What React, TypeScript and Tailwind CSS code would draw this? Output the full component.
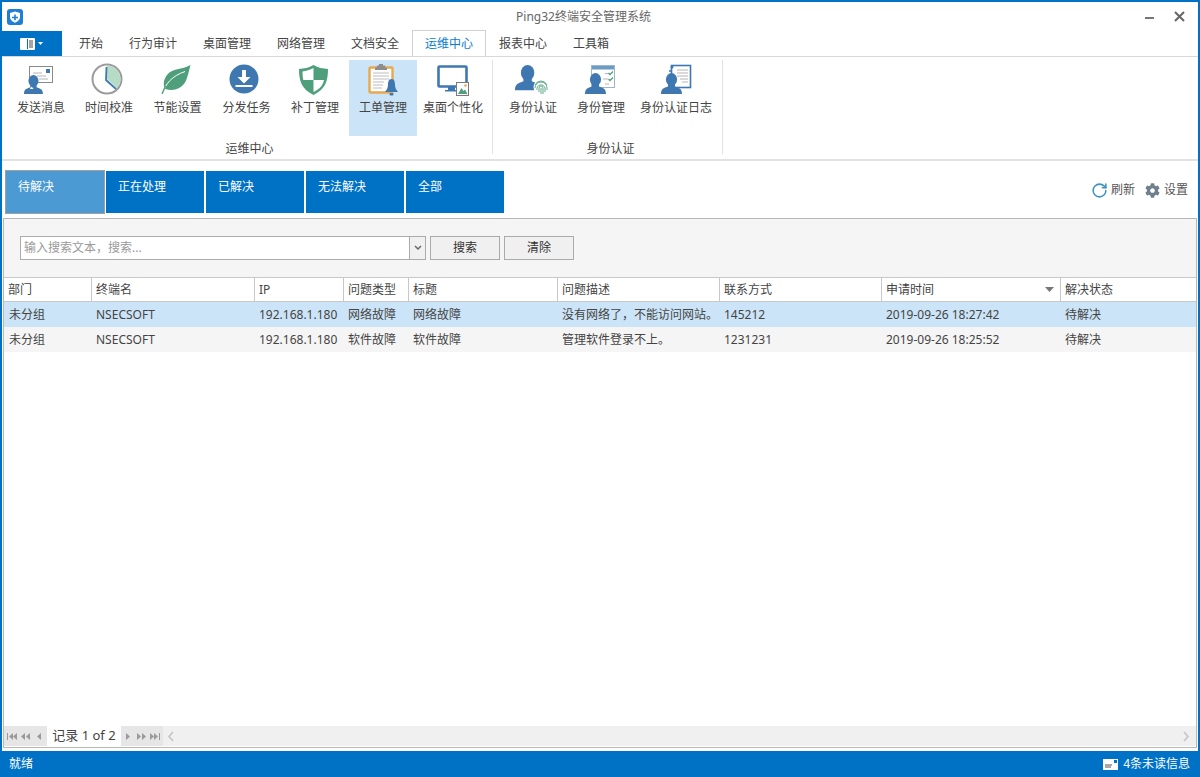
import { RotateCw } from "lucide-react";
import { FaCog } from "react-icons/fa";
import type { ReactNode } from "react";

const BLUE = "#3f78b0";
const GREEN = "#4f9f7c";

const person = (dx: number, dy: number, s = 1) => (
  <g transform={`translate(${dx} ${dy}) scale(${s})`} fill={BLUE}>
    <ellipse cx="10.5" cy="6.5" rx="5.6" ry="6.5" />
    <path d="M7 11 L7 13.5 C3 15 0 15.5 0 21 L21 21 C21 15.5 18 15 14 13.5 L14 11 Z" />
  </g>
);

const icons: Record<string, ReactNode> = {
  send: (
    <>
      <rect x="8.5" y="4.5" width="23" height="16" fill="#fff" stroke="#8a8a8a" />
      <rect x="25" y="7" width="4" height="4" fill={BLUE} />
      <path d="M12 11h9M16 14h9M18 17h9" stroke="#b5b5b5" />
      {person(3, 13, 0.9)}
      <path d="M12.5 27l-1.5-2h-1l-1 2z" fill="#fff" />
    </>
  ),
  clock: (
    <>
      <circle cx="18" cy="17" r="14.5" fill="#fff" stroke="#9b9b9b" strokeWidth="2" />
      <path d="M18 3.5 A13.5 13.5 0 0 1 28 26 L18 17 Z" fill="#b6dcc8" />
      <path d="M17.5 5 L17 18 L27 27" fill="none" stroke={BLUE} strokeWidth="1.8" />
    </>
  ),
  leaf: (
    <>
      <path d="M32.5 3 C24 8 14 6 9 13 C5 18 5 24 7.5 27 C16 30 26 26 29 16 C30.5 11 31.5 7 32.5 3 Z" fill={GREEN} />
      <path d="M4.5 32 C7 22 14 14 27 9.5" fill="none" stroke="#fff" strokeWidth="1" />
      <path d="M4 32 L7.5 24" stroke={GREEN} strokeWidth="1.4" />
    </>
  ),
  download: (
    <>
      <circle cx="17" cy="17" r="14.5" fill={BLUE} />
      <path d="M15 8h4v7h4.5l-6.5 6.5L10.5 15H15z" fill="#fff" />
      <rect x="8.5" y="23" width="17" height="2" fill="#fff" />
    </>
  ),
  shield: (
    <>
      <path d="M18.5 3 C14 6 9 6.5 4 7 C4 18 6 27 18.5 33 C31 27 33 18 33 7 C28 6.5 23 6 18.5 3 Z" fill={GREEN} />
      <path d="M18.5 6 C15 8 11 9 7.5 9.5 C7.5 12 7.6 15 8.3 18 L18.5 18 Z" fill="#fff" />
      <path d="M18.5 18 L29 18 C28 23 25 27 18.5 30 Z" fill="#fff" />
    </>
  ),
  ticket: (
    <>
      <rect x="6.5" y="5.5" width="23" height="25" rx="1" fill="#fff" stroke="#e8a850" strokeWidth="2.4" />
      <path d="M14 5 V3.5 H16 V2 H20 V3.5 H22 V5 L24 6 V8 H12 V6 Z" fill="#8d8d8d" />
      <path d="M10 11h16M10 14h16M10 17h16M10 20h11M10 23h10M10 26h9" stroke="#bdbdbd" />
      <path d="M28.5 17 C25.5 17 25 20 25 23 C25 26 23.5 28 22 30 L35 30 C33.5 28 32 26 32 23 C32 20 31.5 17 28.5 17 Z" fill={BLUE} />
      <rect x="26.5" y="31" width="4" height="2.5" rx="1" fill={BLUE} />
    </>
  ),
  monitor: (
    <>
      <rect x="5.5" y="4.5" width="28" height="20" rx="1" fill="#fff" stroke={BLUE} strokeWidth="2.6" />
      <path d="M15 25h7v3h3v1.5H12V28h3z" fill={BLUE} />
      <rect x="23.5" y="20.5" width="12" height="13" fill="#fff" stroke="#7a7a7a" />
      <path d="M25 32 L28.5 26 L30.5 29 L32 27.5 L34.5 32 Z" fill={GREEN} />
      <circle cx="32.5" cy="23.5" r="1.3" fill="#e8a850" />
    </>
  ),
  finger: (
    <>
      {person(2, 3, 1.2)}
      <circle cx="28" cy="25" r="7.5" fill="#fff" />
      <g fill="none" stroke={GREEN} strokeWidth="0.9">
        <path d="M22 23 A6.5 6.5 0 0 1 34 23" />
        <path d="M22 26 A6 6 0 0 1 34 26 L34 28" />
        <path d="M24 28 A4 4 0 0 1 32 26 L32 30" />
        <path d="M26 30 L26 26 A2 2 0 0 1 30 26 L30 32" />
        <path d="M28 26 L28 32" />
      </g>
    </>
  ),
  manage: (
    <>
      <rect x="10.5" y="3.5" width="23" height="22" fill="#fff" stroke="#9fb6ca" />
      <rect x="11" y="4" width="22" height="3.5" fill="#6c9cc4" />
      <path d="M24 11.5h4M22 17h5M24 22h4" stroke="#b5b5b5" fill="none" />
      <path d="M27.5 11 l1.5 1.5 3-3 M27.5 17 l1.5 1.5 3-3" stroke={GREEN} strokeWidth="1.3" fill="none" />
      {person(4, 11)}
    </>
  ),
  log: (
    <>
      <rect x="15.5" y="3.5" width="19" height="22" fill="#fff" stroke={BLUE} strokeWidth="1.6" />
      <path d="M21 8h11M21 11h11M21 14h11M24 17h8M26 20h6" stroke="#b5b5b5" />
      <circle cx="16" cy="5" r="1.5" fill={BLUE} />
      <circle cx="14" cy="9" r="1" fill={BLUE} />
      {person(5, 11)}
    </>
  ),
};

function RibbonButton({ icon, label, w, active }: { icon: string; label: string; w: string; active?: boolean }) {
  return (
    <div className={`${w} h-[76px] flex flex-col items-center pt-[2px] ${active ? "bg-[#cce4f7]" : ""}`}>
      <svg width="40" height="36" viewBox="0 0 40 36">
        {icons[icon]}
      </svg>
      <span className="mt-[2px] leading-[16px] whitespace-nowrap">{label}</span>
    </div>
  );
}

const tabs = ["开始", "行为审计", "桌面管理", "网络管理", "文档安全", "运维中心", "报表中心", "工具箱"];
const filters = ["待解决", "正在处理", "已解决", "无法解决", "全部"];
const headers = ["部门", "终端名", "IP", "问题类型", "标题", "问题描述", "联系方式", "申请时间", "解决状态"];
const rows = [
  ["未分组", "NSECSOFT", "192.168.1.180", "网络故障", "网络故障", "没有网络了，不能访问网站。", "145212", "2019-09-26 18:27:42", "待解决"],
  ["未分组", "NSECSOFT", "192.168.1.180", "软件故障", "软件故障", "管理软件登录不上。", "1231231", "2019-09-26 18:25:52", "待解决"],
];
const GRID = "grid grid-cols-[88px_163px_89px_65px_149px_162px_162px_179px_135px]";

function Nav({ d }: { d: string }) {
  return (
    <svg width="13" height="9" viewBox="0 0 13 9" className="shrink-0">
      <path d={d} fill="#9a9a9a" />
    </svg>
  );
}

export default function App() {
  return (
    <div
      className="w-[1200px] h-[777px] flex flex-col bg-white border-x-2 border-t-2 border-[#0072c6] text-[12px] text-[#444] overflow-hidden"
      style={{ fontFamily: '"Noto Sans", "Noto Sans CJK SC", sans-serif' }}
    >
      {/* title bar */}
      <div className="h-[29px] flex items-center relative shrink-0">
        <svg width="16" height="16" viewBox="0 0 16 16" className="ml-[5px]">
          <rect width="16" height="16" rx="3" fill="#1f7fd6" />
          <path d="M8 2.5 L13 4 V8 C13 11 10.5 12.7 8 13.7 C5.5 12.7 3 11 3 8 V4 Z" fill="#fff" />
          <path d="M7.2 5.5h1.6v2.2H11v1.6H8.8v2H7.2v-2H5V7.7h2.2z" fill="#1f7fd6" />
        </svg>
        <div className="flex-1 text-center text-[#666] pl-[1px] pr-[2px]">Ping32终端安全管理系统</div>
        <div className="flex items-center mr-[13px] gap-[20px]">
          <div className="w-[9px] h-[2px] bg-[#777] mt-[2px]" />
          <svg width="11" height="11" viewBox="0 0 11 11">
            <path d="M1 1 L10 10 M10 1 L1 10" stroke="#666" strokeWidth="2" />
          </svg>
        </div>
      </div>

      {/* tabs */}
      <div className="h-[26px] flex items-stretch border-b border-[#d8d8d8] shrink-0 -ml-[2px]">
        <div className="w-[62px] bg-[#0072c6] flex items-center justify-center gap-[3px]">
          <svg width="15" height="12" viewBox="0 0 15 12">
            <rect width="15" height="12" rx="1" fill="#fff" />
            <rect x="7" y="1" width="1" height="10" fill="#0072c6" />
            <path d="M9 3h4M9 5h4M9 7h4M9 9h4" stroke="#4a4a4a" />
          </svg>
          <svg width="5" height="3" viewBox="0 0 5 3">
            <path d="M0 0h5L2.5 3z" fill="#fff" />
          </svg>
        </div>
        <div className="flex ml-[4px]">
          {tabs.map((t) =>
            t === "运维中心" ? (
              <div
                key={t}
                className="px-[12px] h-[26px] -mt-[1px] flex items-center bg-white border-x border-t border-[#d0d0d0] text-[#0a7bd0] z-10"
              >
                {t}
              </div>
            ) : (
              <div key={t} className="px-[13px] flex items-center">
                {t}
              </div>
            )
          )}
        </div>
      </div>

      {/* ribbon */}
      <div className="h-[104px] flex pl-[5px] pt-[3px] border-b-2 border-[#e2e2e2] shrink-0">
        <div className="flex flex-col items-center w-[486px] border-r border-[#e2e2e2] h-[94px] mt-[3px] -translate-y-[3px]">
          <div className="flex w-full">
            <RibbonButton icon="send" label="发送消息" w="w-[68px]" />
            <RibbonButton icon="clock" label="时间校准" w="w-[68px]" />
            <RibbonButton icon="leaf" label="节能设置" w="w-[69px]" />
            <RibbonButton icon="download" label="分发任务" w="w-[69px]" />
            <RibbonButton icon="shield" label="补丁管理" w="w-[68px]" />
            <RibbonButton icon="ticket" label="工单管理" w="w-[68px]" active />
            <RibbonButton icon="monitor" label="桌面个性化" w="w-[72px]" />
          </div>
          <div className="mt-[5px] leading-[16px]">运维中心</div>
        </div>
        <div className="flex flex-col items-center w-[230px] border-r border-[#e2e2e2] h-[94px] pl-[6px]">
          <div className="flex w-full">
            <RibbonButton icon="finger" label="身份认证" w="w-[68px]" />
            <RibbonButton icon="manage" label="身份管理" w="w-[68px]" />
            <RibbonButton icon="log" label="身份认证日志" w="w-[82px]" />
          </div>
          <div className="mt-[5px] leading-[16px]">身份认证</div>
        </div>
      </div>

      {/* filter bar */}
      <div className="h-[57px] shrink-0 flex items-start pt-[10px] pl-[4px] relative">
        <div className="flex gap-[2px]">
          {filters.map((f, i) => (
            <div
              key={f}
              className={`w-[98px] h-[42px] pl-[12px] pt-[7px] leading-[18px] text-white ${
                i === 0 ? "bg-[#4b9ad4] outline outline-1 outline-[#a0a0a0] outline-offset-0" : "bg-[#0072c6]"
              }`}
            >
              {f}
            </div>
          ))}
        </div>
        <div className="ml-auto mr-[10px] mt-[10px] flex items-center text-[#555]">
          <RotateCw size={17} strokeWidth={2.2} color="#3d93c4" className="-scale-y-100 rotate-180 -scale-x-100" />
          <span className="ml-[3px]">刷新</span>
          <FaCog size={15} color="#6f7f8c" className="ml-[10px]" />
          <span className="ml-[4px]">设置</span>
        </div>
      </div>

      {/* main panel */}
      <div className="mx-[1px] h-[530px] shrink-0 border border-[#b8b8b8] flex flex-col bg-white">
        <div className="h-[58px] bg-[#f5f5f5] flex items-start pt-[17px] pl-[16px] shrink-0">
          <div className="w-[390px] h-[24px] bg-white border border-[#ababab] flex items-center pl-[3px] text-[#9a9a9a]">
            输入搜索文本，搜索...
          </div>
          <div className="w-[16px] h-[24px] border border-l-0 border-[#ababab] bg-[#f0f0f0] flex items-center justify-center">
            <svg width="8" height="6" viewBox="0 0 8 6">
              <path d="M1 1l3 3 3-3" fill="none" stroke="#666" strokeWidth="1.5" />
            </svg>
          </div>
          <div className="ml-[4px] w-[70px] h-[24px] bg-[#f0f0f0] border border-[#ababab] flex items-center justify-center text-[#333]">
            搜索
          </div>
          <div className="ml-[4px] w-[70px] h-[24px] bg-[#f0f0f0] border border-[#ababab] flex items-center justify-center text-[#333]">
            清除
          </div>
        </div>

        <div className={`${GRID} h-[25px] bg-white border-y border-[#c8c8c8] shrink-0`}>
          {headers.map((h, i) => (
            <div
              key={h}
              className={`flex items-center justify-between pl-[4px] pr-[6px] ${i < 8 ? "border-r border-[#c8c8c8]" : ""}`}
            >
              <span>{h}</span>
              {h === "申请时间" && (
                <svg width="9" height="5" viewBox="0 0 9 5">
                  <path d="M0 0h9L4.5 5z" fill="#777" />
                </svg>
              )}
            </div>
          ))}
        </div>

        {rows.map((r, i) => (
          <div key={i} className={`${GRID} h-[25px] shrink-0 ${i === 0 ? "bg-[#cce4f7]" : "bg-[#f5f5f5]"}`}>
            {r.map((c, j) => (
              <div key={j} className={`flex items-center whitespace-nowrap ${j === 0 ? "pl-[5px]" : "pl-[4px]"}`}>
                {c}
              </div>
            ))}
          </div>
        ))}

        <div className="flex-1" />

        {/* footer nav */}
        <div className="h-[20px] flex items-stretch bg-[#f0f0f0] shrink-0 mb-[1px]">
          <div className="flex items-center w-[43px] bg-[#e6e6e6] pl-[1px] gap-[1px]">
            <Nav d="M2 1h1v7H2zM8 1v7L4 4.5zM12 1v7L8 4.5z" />
            <Nav d="M6 1v7L2 4.5zM11 1v7L7 4.5z" />
            <Nav d="M8 1v7L4 4.5z" />
          </div>
          <div className="w-[74px] bg-white flex items-center justify-center text-[13px] whitespace-nowrap">
            记录 1 of 2
          </div>
          <div className="flex items-center w-[42px] bg-[#e6e6e6] gap-[1px]">
            <Nav d="M5 1v7l4-3.5z" />
            <Nav d="M2 1v7l4-3.5zM7 1v7l4-3.5z" />
            <Nav d="M1 1v7l4-3.5zM5 1v7l4-3.5zM10 1h1v7h-1z" />
          </div>
          <div className="flex-1 flex items-center justify-between px-[4px]">
            <svg width="8" height="11" viewBox="0 0 8 11">
              <path d="M6 1L2 5.5 6 10" fill="none" stroke="#c4c4c4" strokeWidth="1.6" />
            </svg>
            <svg width="8" height="11" viewBox="0 0 8 11" className="mr-[2px]">
              <path d="M2 1l4 4.5L2 10" fill="none" stroke="#c4c4c4" strokeWidth="1.6" />
            </svg>
          </div>
        </div>
      </div>

      <div className="flex-1" />

      {/* status bar */}
      <div className="h-[26px] shrink-0 bg-[#0072c6] text-white flex items-center justify-between pl-[7px] pr-[8px]">
        <span>就绪</span>
        <div className="flex items-center gap-[5px]">
          <svg width="15" height="11" viewBox="0 0 15 11">
            <rect width="15" height="11" fill="#fff" />
            <rect x="11" y="1" width="3" height="3" fill="#0072c6" />
            <path d="M2 6h7M2 8h6" stroke="#555" />
          </svg>
          <span>4条未读信息</span>
        </div>
      </div>
    </div>
  );
}
